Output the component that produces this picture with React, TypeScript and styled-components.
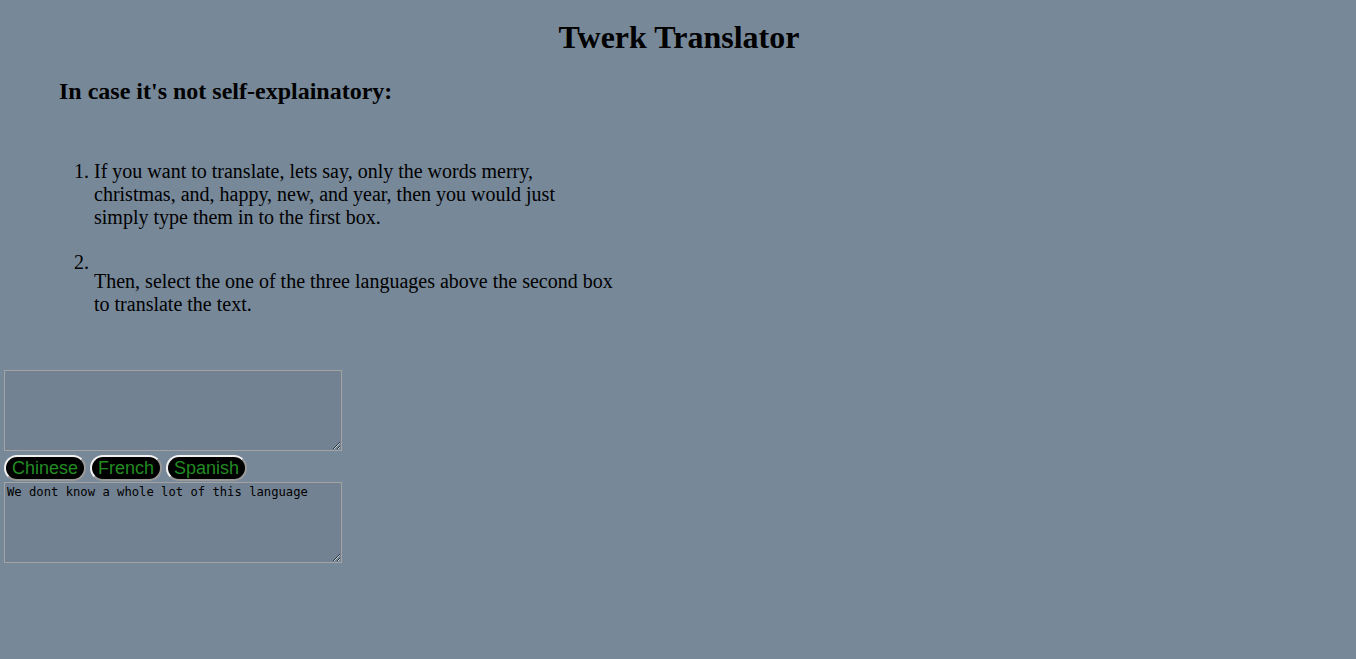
import { createGlobalStyle, styled } from "styled-components";

const languages = ["Chinese", "French", "Spanish"];

const GlobalStyle = createGlobalStyle`
  html, body {
    margin: 0;
    padding: 0;
    background-color: #778899;
  }
  body {
    font-family: "Liberation Serif", "Times New Roman", serif;
    color: #000;
  }
`;

const App = () => {
  return (
    <Page>
      <GlobalStyle />
      <Title>Twerk Translator</Title>
      <Subtitle>In case it's not self-explainatory:</Subtitle>
      <Steps>
        <Step>
          If you want to translate, lets say, only the words merry, christmas, and, happy, new, and year, then
          you would just simply type them in to the first box.
        </Step>
        <Step>
          <Blank>{"\u00a0"}</Blank>
          <StepText>Then, select the one of the three languages above the second box to translate the text.</StepText>
        </Step>
      </Steps>
      <Translator>
        <TextBox />
        <ButtonRow>
          {languages.map(lang => (
            <LangButton key={lang}>{lang}</LangButton>
          ))}
        </ButtonRow>
        <TextBox readOnly defaultValue="We dont know a whole lot of this language" />
      </Translator>
    </Page>
  );
};

export default App;

const Page = styled.div`
  display: flex;
  flex-direction: column;
  min-height: 659px;
  box-sizing: border-box;
  padding-top: 19px;
`;

const Title = styled.h1`
  margin: 0;
  font-size: 32px;
  line-height: 37px;
  font-weight: 700;
  text-align: center;
  padding-left: 2px;
`;

const Subtitle = styled.h2`
  margin: 21px 0 0 59px;
  font-size: 24px;
  line-height: 28px;
  font-weight: 700;
`;

const Steps = styled.ol`
  margin: 55px 0 0 54px;
  padding-left: 40px;
  width: 519.6px;
  font-size: 20px;
  line-height: 23px;
`;

const Step = styled.li`
  & + & {
    margin-top: 22px;
  }
`;

const Blank = styled.div`
  line-height: 15px;
  height: 15px;
`;

const StepText = styled.div`
  line-height: 23px;
`;

const Translator = styled.div`
  display: flex;
  flex-direction: column;
  align-items: flex-start;
  margin-top: 54px;
  padding-left: 4px;
`;

const TextBox = styled.textarea`
  box-sizing: border-box;
  width: 338px;
  height: 81px;
  margin: 0;
  padding: 2px;
  border: 1px solid #a3a3a3;
  background-color: rgba(80, 90, 100, 0.12);
  color: #000;
  font-family: "DejaVu Sans Mono", monospace;
  font-size: 12.2px;
  line-height: 15px;
  outline: none;
`;

const ButtonRow = styled.div`
  display: flex;
  gap: 4px;
  margin: 4px 0 1px;
`;

const LangButton = styled.button`
  box-sizing: border-box;
  height: 26px;
  padding: 0 6px;
  border: 2px solid;
  border-color: #f2f2f2 #9a9a9a #9a9a9a #f2f2f2;
  border-radius: 13px;
  background-color: #000;
  color: #228b22;
  font-family: "Liberation Sans", Arial, sans-serif;
  font-size: 18px;
  line-height: 20px;
  cursor: pointer;
`;
